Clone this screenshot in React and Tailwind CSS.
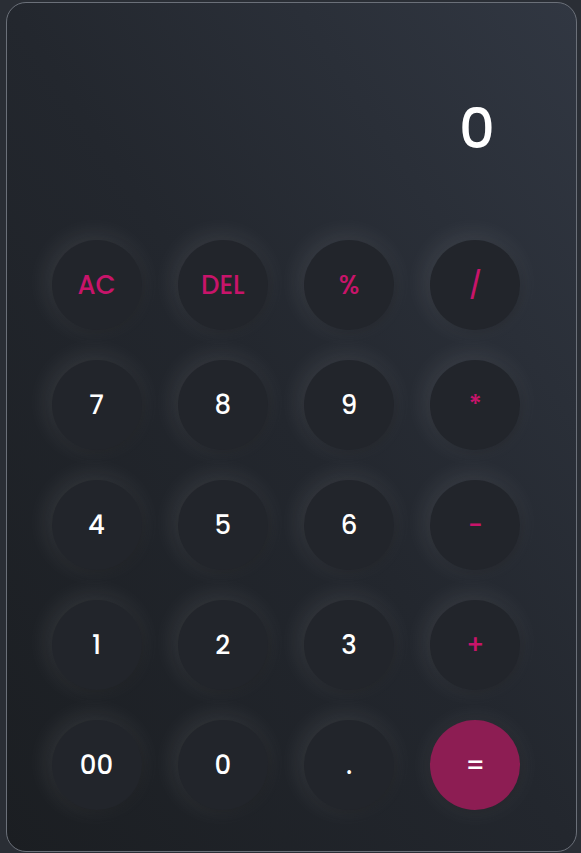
import React, { useState } from 'react';

const keys = [
  { label: 'AC', kind: 'op' }, { label: 'DEL', kind: 'op' }, { label: '%', kind: 'op' }, { label: '/', kind: 'op' },
  { label: '7' }, { label: '8' }, { label: '9' }, { label: '*', kind: 'op' },
  { label: '4' }, { label: '5' }, { label: '6' }, { label: '-', kind: 'op' },
  { label: '1' }, { label: '2' }, { label: '3' }, { label: '+', kind: 'op' },
  { label: '00' }, { label: '0' }, { label: '.' }, { label: '=', kind: 'eq' },
];

const font = { fontFamily: 'Poppins, Lato, "Noto Sans", sans-serif' };

export default function App() {
  const [value] = useState('0');

  return (
    <div className="w-[581px] h-[853px] bg-[#2a2e35] overflow-hidden pt-[2px] pl-[6px]" style={font}>
      <div className="w-[571px] h-[850px] rounded-[20px] border border-[#6b7079] bg-gradient-to-tr from-[#1b1e22] via-[#23272e] to-[#313742] flex flex-col">
        <div className="h-[237px] flex items-start justify-end pr-[81px] pt-[96px]">
          <span className="text-[56px] leading-[60px] font-medium text-white">{value}</span>
        </div>
        <div className="grid grid-cols-[repeat(4,90px)] gap-x-[36.3px] gap-y-[30px] pl-[44.5px]">
          {keys.map((k) => (
            <button
              key={k.label}
              className={
                'w-[90px] h-[90px] rounded-full flex items-center justify-center text-[26px] font-medium ' +
                (k.kind === 'eq'
                  ? 'bg-[#8d1d53] text-white shadow-[0_0_24px_rgba(255,255,255,0.09),2px_2px_10px_rgba(0,0,0,0.2)]'
                  : 'bg-[#22252b] shadow-[-3px_-3px_26px_rgba(255,255,255,0.11),3px_3px_10px_rgba(0,0,0,0.2)] ' +
                    (k.kind === 'op' ? 'text-[#c8146a]' : 'text-white'))
              }
            >
              {k.label}
            </button>
          ))}
        </div>
      </div>
    </div>
  );
}
